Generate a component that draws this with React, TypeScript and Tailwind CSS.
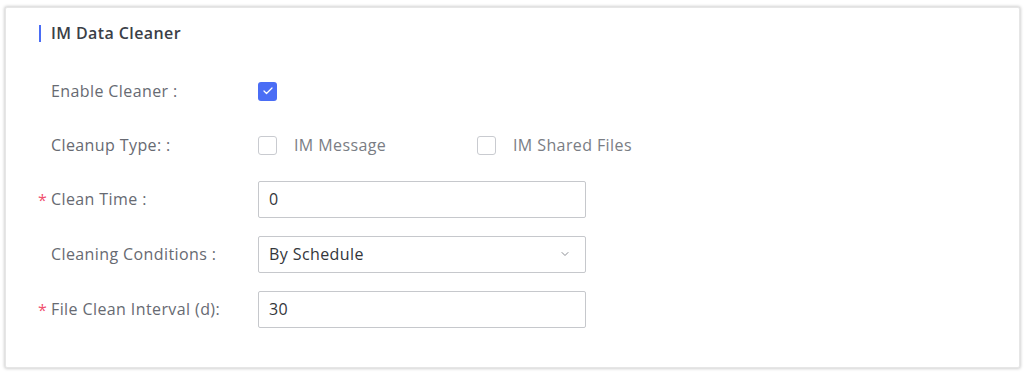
import { ChevronDown, Check } from 'lucide-react';

function Label({ text, required }: { text: string; required?: boolean }) {
  return (
    <div className="relative w-[207px] shrink-0 text-[16px] tracking-[0.4px] text-[#676a72]">
      {required && (
        <span className="absolute -left-[13px] top-[1px] text-[#f0506e]">*</span>
      )}
      {text}
    </div>
  );
}

function Box({ checked }: { checked?: boolean }) {
  return checked ? (
    <span className="flex h-[19px] w-[19px] items-center justify-center rounded-[3px] bg-[#4a6df5]">
      <Check className="h-3 w-3 text-white" strokeWidth={2.5} />
    </span>
  ) : (
    <span className="h-[19px] w-[19px] rounded-[3px] border border-[#c9cbd0] bg-white" />
  );
}

function Field({ value, select }: { value: string; select?: boolean }) {
  return (
    <div className="flex h-[37px] w-[328px] items-center justify-between rounded-[2px] border border-[#c6c8cc] bg-white pl-[10px] pr-[14px] text-[16px] tracking-[0.4px] text-[#33363b]">
      <span>{value}</span>
      {select && <ChevronDown className="h-3 w-3 text-[#8a8d93]" strokeWidth={2} />}
    </div>
  );
}

export default function App() {
  return (
    <div className="h-[374px] w-[1026px] bg-white pl-[5px] pr-[6px] pt-[7px] font-['Open_Sans',sans-serif]">
      <div className="h-[361px] rounded-[2px] border border-[#e6e6e6] bg-white shadow-[0_0_3px_1px_rgba(0,0,0,0.18)]">
        <div className="flex items-center pl-[33px] pt-[13px]">
          <span className="h-[17px] w-[2px] bg-[#4a6df5]" />
          <span className="ml-[10px] text-[16px] font-semibold tracking-[0.4px] text-[#3b3f47]">IM Data Cleaner</span>
        </div>
        <div className="flex flex-col pl-[45px] pt-[19px]">
          <div className="flex h-[54px] items-center">
            <Label text="Enable Cleaner :" />
            <Box checked />
          </div>
          <div className="flex h-[54px] items-center">
            <Label text="Cleanup Type: :" />
            <div className="flex items-center">
              <Box />
              <span className="ml-[17px] w-[183px] text-[16px] tracking-[0.4px] text-[#7a7d84]">IM Message</span>
              <Box />
              <span className="ml-[17px] text-[16px] tracking-[0.4px] text-[#7a7d84]">IM Shared Files</span>
            </div>
          </div>
          <div className="flex h-[54px] items-center">
            <Label text="Clean Time :" required />
            <Field value="0" />
          </div>
          <div className="flex h-[56px] items-center">
            <Label text="Cleaning Conditions :" />
            <Field value="By Schedule" select />
          </div>
          <div className="flex h-[54px] items-center">
            <Label text="File Clean Interval (d):" required />
            <Field value="30" />
          </div>
        </div>
      </div>
    </div>
  );
}
